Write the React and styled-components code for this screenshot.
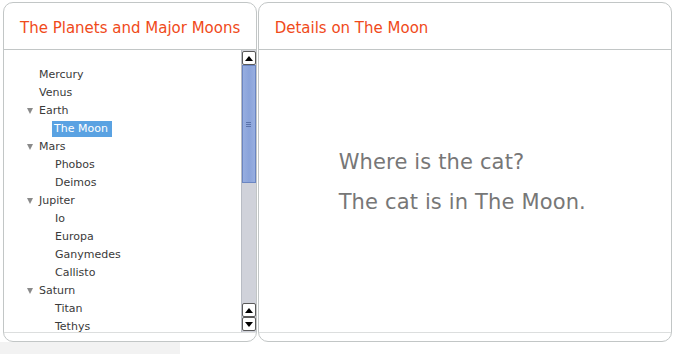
import React from "react";
import styled, { createGlobalStyle } from "styled-components";

const Global = createGlobalStyle`
  html, body { margin: 0; padding: 0; background: #fff; }
  body { font-family: "DejaVu Sans", Verdana, sans-serif; overflow: hidden; }
`;

const Page = styled.div`
  width: 674px;
  height: 354px;
  display: flex;
  flex-direction: column;
`;

const Panels = styled.div`
  display: flex;
  gap: 1px;
  padding: 2px 2px 0 3px;
  height: 340px;
`;

const Panel = styled.section`
  box-sizing: border-box;
  width: ${(p) => p.$w}px;
  height: 340px;
  border: 1px solid #c2c6c6;
  border-radius: 10px;
  display: flex;
  flex-direction: column;
  overflow: hidden;
  background: #fff;
`;

const Header = styled.header`
  box-sizing: border-box;
  height: 47px;
  flex: none;
  border-bottom: 1px solid #c2c6c6;
  display: flex;
  align-items: center;
  padding: 3px 0 0 16px;
  font-family: "DejaVu Sans", sans-serif;
  font-size: 15px;
  color: #f04a1a;
`;

const Body = styled.div`
  flex: 1;
  display: flex;
  min-height: 0;
`;

const Footer = styled.div`
  height: 8px;
  flex: none;
  border-top: 1px solid #dcdede;
`;

const TreeArea = styled.div`
  flex: 1;
  padding-top: 16px;
  overflow: hidden;
`;

const Row = styled.div`
  height: 18px;
  display: flex;
  align-items: center;
  padding-left: ${(p) => 21 + p.$level * 16}px;
  font-size: 11px;
  color: #3c3c3c;
`;

const Twisty = styled.span`
  width: 12px;
  flex: none;
  display: flex;
  align-items: center;
  &::before {
    content: "";
    display: ${(p) => (p.$open ? "block" : "none")};
    width: 0;
    height: 0;
    border-left: 3.5px solid transparent;
    border-right: 3.5px solid transparent;
    border-top: 6px solid #8a8a8a;
    margin-left: 2px;
  }
`;

const Label = styled.span`
  padding: 1px 2px;
  line-height: 14px;
  background: ${(p) => (p.$selected ? "#5aa2e2" : "transparent")};
  color: ${(p) => (p.$selected ? "#fff" : "#3a3a3a")};
  ${(p) => (p.$selected ? "margin-left: -1px; padding-right: 4px;" : "")}
`;

const Scrollbar = styled.div`
  width: 15px;
  flex: none;
  display: flex;
  flex-direction: column;
  background: #d0d2da;
  border-left: 1px solid #b8bcc4;
  box-sizing: border-box;
  padding: 1px 0 1px;
`;

const ScrollButton = styled.div`
  box-sizing: border-box;
  height: 14px;
  flex: none;
  background: #fff;
  border: 1px solid #5a5a5a;
  border-radius: 2px;
  display: flex;
  align-items: center;
  justify-content: center;
  &::before {
    content: "";
    width: 0;
    height: 0;
    border-left: 4px solid transparent;
    border-right: 4px solid transparent;
    ${(p) => (p.$down ? "border-top: 5px solid #000;" : "border-bottom: 5px solid #000;")}
  }
`;

const Thumb = styled.div`
  box-sizing: border-box;
  height: 118px;
  flex: none;
  background: linear-gradient(to right, #97aee0, #8aa3da 50%, #97aee0);
  border: 1px solid #6b86c2;
  display: flex;
  align-items: center;
  justify-content: center;
`;

const Grip = styled.div`
  width: 5px;
  height: 5px;
  border-top: 1px solid #5a72aa;
  border-bottom: 1px solid #5a72aa;
  box-sizing: border-box;
  position: relative;
  &::after {
    content: "";
    position: absolute;
    left: 0;
    right: 0;
    top: 1px;
    border-top: 1px solid #5a72aa;
  }
`;

const Track = styled.div`
  flex: 1;
`;

const Details = styled.div`
  flex: 1;
  display: flex;
  flex-direction: column;
  padding: 92px 0 0 80px;
  font-size: 21px;
  letter-spacing: 0.15px;
  color: #777;
`;

const Line = styled.div`
  height: 40px;
  line-height: 40px;
`;

const Strip = styled.div`
  width: 180px;
  height: 12px;
  background: #f2f2f2;
`;

const tree = [
  { name: "Mercury", level: 0 },
  { name: "Venus", level: 0 },
  { name: "Earth", level: 0, open: true },
  { name: "The Moon", level: 1, selected: true },
  { name: "Mars", level: 0, open: true },
  { name: "Phobos", level: 1 },
  { name: "Deimos", level: 1 },
  { name: "Jupiter", level: 0, open: true },
  { name: "Io", level: 1 },
  { name: "Europa", level: 1 },
  { name: "Ganymedes", level: 1 },
  { name: "Callisto", level: 1 },
  { name: "Saturn", level: 0, open: true },
  { name: "Titan", level: 1 },
  { name: "Tethys", level: 1 },
];

export default function App() {
  return (
    <Page>
      <Global />
      <Panels>
        <Panel $w={254}>
          <Header>The Planets and Major Moons</Header>
          <Body>
            <TreeArea>
              {tree.map((n) => (
                <Row key={n.name} $level={n.level}>
                  <Twisty $open={n.open} />
                  <Label $selected={n.selected}>{n.name}</Label>
                </Row>
              ))}
            </TreeArea>
            <Scrollbar>
              <ScrollButton />
              <Thumb>
                <Grip />
              </Thumb>
              <Track />
              <ScrollButton />
              <ScrollButton $down />
            </Scrollbar>
          </Body>
          <Footer />
        </Panel>
        <Panel $w={415}>
          <Header>Details on The Moon</Header>
          <Body>
            <Details>
              <Line>Where is the cat?</Line>
              <Line>The cat is in The Moon.</Line>
            </Details>
          </Body>
          <Footer />
        </Panel>
      </Panels>
      <Strip />
    </Page>
  );
}
